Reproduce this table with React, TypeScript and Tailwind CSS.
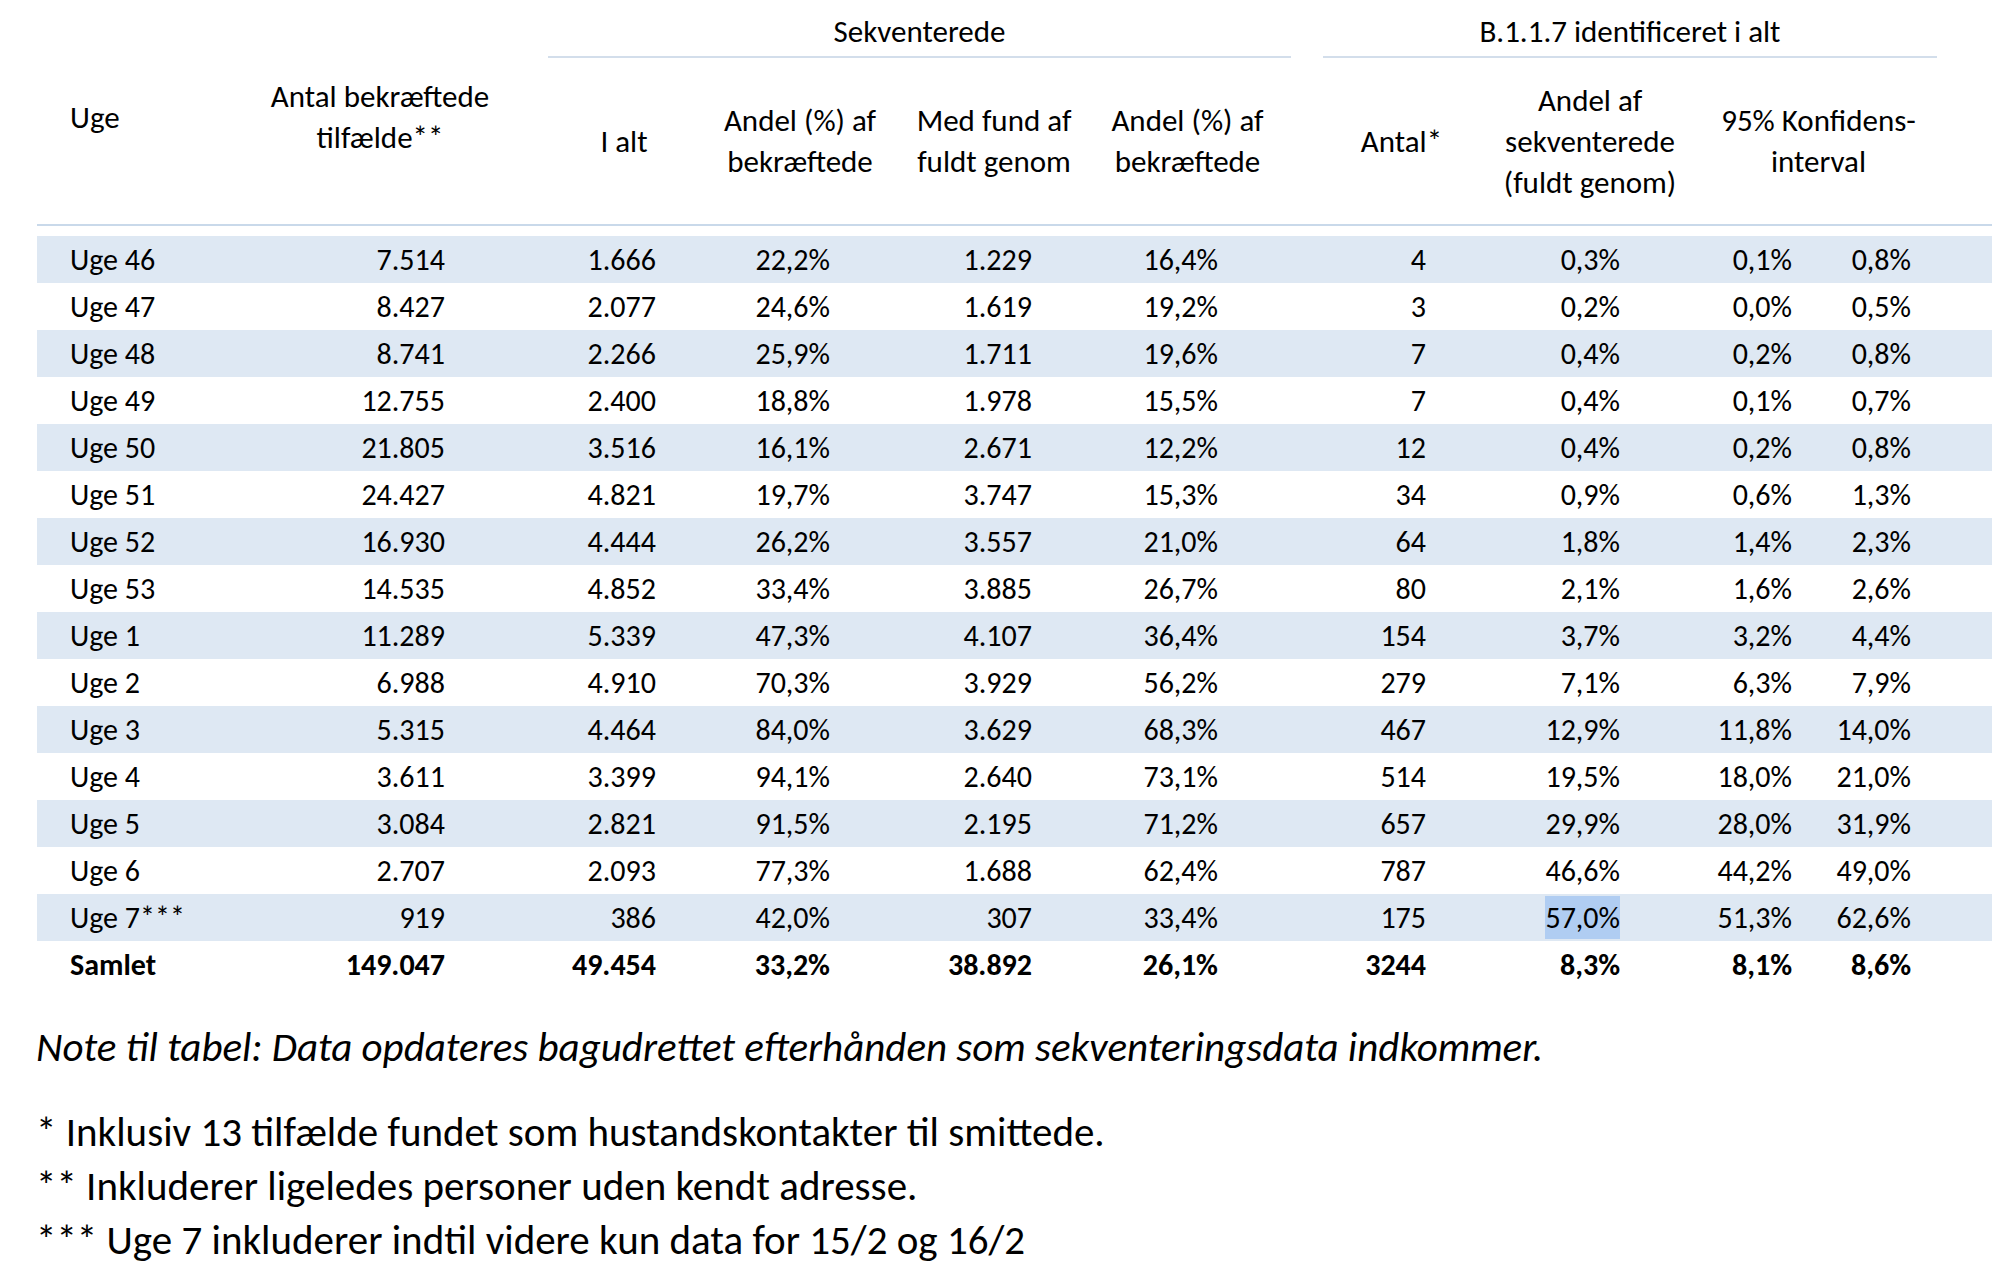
const font = { fontFamily: 'Carlito, Calibri, Lato, sans-serif' }

type Row = { uge: string; cells: string[]; band: boolean }

const data: [string, ...string[]][] = [
  ['Uge 46', '7.514', '1.666', '22,2%', '1.229', '16,4%', '4', '0,3%', '0,1%', '0,8%'],
  ['Uge 47', '8.427', '2.077', '24,6%', '1.619', '19,2%', '3', '0,2%', '0,0%', '0,5%'],
  ['Uge 48', '8.741', '2.266', '25,9%', '1.711', '19,6%', '7', '0,4%', '0,2%', '0,8%'],
  ['Uge 49', '12.755', '2.400', '18,8%', '1.978', '15,5%', '7', '0,4%', '0,1%', '0,7%'],
  ['Uge 50', '21.805', '3.516', '16,1%', '2.671', '12,2%', '12', '0,4%', '0,2%', '0,8%'],
  ['Uge 51', '24.427', '4.821', '19,7%', '3.747', '15,3%', '34', '0,9%', '0,6%', '1,3%'],
  ['Uge 52', '16.930', '4.444', '26,2%', '3.557', '21,0%', '64', '1,8%', '1,4%', '2,3%'],
  ['Uge 53', '14.535', '4.852', '33,4%', '3.885', '26,7%', '80', '2,1%', '1,6%', '2,6%'],
  ['Uge 1', '11.289', '5.339', '47,3%', '4.107', '36,4%', '154', '3,7%', '3,2%', '4,4%'],
  ['Uge 2', '6.988', '4.910', '70,3%', '3.929', '56,2%', '279', '7,1%', '6,3%', '7,9%'],
  ['Uge 3', '5.315', '4.464', '84,0%', '3.629', '68,3%', '467', '12,9%', '11,8%', '14,0%'],
  ['Uge 4', '3.611', '3.399', '94,1%', '2.640', '73,1%', '514', '19,5%', '18,0%', '21,0%'],
  ['Uge 5', '3.084', '2.821', '91,5%', '2.195', '71,2%', '657', '29,9%', '28,0%', '31,9%'],
  ['Uge 6', '2.707', '2.093', '77,3%', '1.688', '62,4%', '787', '46,6%', '44,2%', '49,0%'],
  ['Uge 7***', '919', '386', '42,0%', '307', '33,4%', '175', '57,0%', '51,3%', '62,6%'],
]

const rows: Row[] = data.map(([uge, ...cells], i) => ({ uge, cells, band: i % 2 === 0 }))

const grid = 'grid grid-cols-[163px_348px_152px_180px_220px_191px_32px_157px_220px_120px_117px_55px]'

// padding-right per data column so the numbers line up with the reference
const pad = ['pr-[103px]', 'pr-[44px]', 'pr-[50px]', 'pr-[68px]', 'pr-[73px]', 'pr-[54px]', 'pr-[80px]', 'pr-[28px]', 'pr-[26px]']

function Cells({ cells, highlight }: { cells: string[]; highlight?: boolean }) {
  return (
    <>
      {cells.slice(0, 5).map((c, i) => (
        <div key={i} className={`text-right ${pad[i]}`}>{c}</div>
      ))}
      <div />
      {cells.slice(5).map((c, i) => (
        <div key={i + 5} className={`text-right ${pad[i + 5]}`}>
          {highlight && i === 1 ? <span className="bg-[#b0cdf2] py-[3px]">{c}</span> : c}
        </div>
      ))}
      <div />
    </>
  )
}

function HeadCell({ lines, className = '' }: { lines: string[]; className?: string }) {
  return (
    <div className={`flex flex-col items-center justify-center text-center leading-[41px] ${className}`}>
      {lines.map(l => <span key={l}>{l}</span>)}
    </div>
  )
}

export default function App() {
  return (
    <div className="min-h-[1279px] w-[2000px] bg-white text-[30px] font-medium text-black tabular-nums" style={font}>
      <div className="ml-[37px] w-[1955px]">
        <div className={`${grid} grid-rows-[58px_166px] border-b-2 border-[#c9d9ea] text-[31px]`}>
          <div className="row-span-2 flex items-center pl-[33px] pt-[10px]">Uge</div>
          <HeadCell className="row-span-2 pt-[10px] pl-[12px]" lines={['Antal bekræftede', 'tilfælde**']} />
          <div className="col-span-4 flex items-end justify-center pb-[8px] leading-[34px] border-b-2 border-[#d3deeb]">Sekventerede</div>
          <div />
          <div className="col-span-4 flex items-end justify-center pb-[8px] leading-[34px] border-b-2 border-[#d3deeb]">B.1.1.7 identificeret i alt</div>
          <div />
          <HeadCell lines={['I alt']} />
          <HeadCell className="pl-[20px]" lines={['Andel (%) af', 'bekræftede']} />
          <HeadCell className="pl-[8px]" lines={['Med fund af', 'fuldt genom']} />
          <HeadCell className="pr-[16px]" lines={['Andel (%) af', 'bekræftede']} />
          <div />
          <HeadCell lines={['Antal*']} />
          <HeadCell lines={['Andel af', 'sekventerede', '(fuldt genom)']} />
          <HeadCell className="col-span-2" lines={['95% Konfidens-', 'interval']} />
          <div />
        </div>

        <div className="mt-[10px]">
          {rows.map(r => (
            <div key={r.uge} className={`${grid} h-[47px] items-center ${r.band ? 'bg-[#dee8f3]' : ''}`}>
              <div className="pl-[33px]">{r.uge}</div>
              <Cells cells={r.cells} highlight={r.uge === 'Uge 7***'} />
            </div>
          ))}
          <div className={`${grid} h-[47px] items-center font-bold`}>
            <div className="pl-[33px]">Samlet</div>
            <Cells cells={['149.047', '49.454', '33,2%', '38.892', '26,1%', '3244', '8,3%', '8,1%', '8,6%']} />
          </div>
        </div>
      </div>

      <div className="pl-[36px] mt-[37px]">
        <p className="text-[41px] italic leading-[44px]">
          Note til tabel: Data opdateres bagudrettet efterhånden som sekventeringsdata indkommer.
        </p>
        <div className="mt-[36px] text-[41px] leading-[54px]">
          <p>* Inklusiv 13 tilfælde fundet som hustandskontakter til smittede.</p>
          <p>** Inkluderer ligeledes personer uden kendt adresse.</p>
          <p>*** Uge 7 inkluderer indtil videre kun data for 15/2 og 16/2</p>
        </div>
      </div>
    </div>
  )
}
